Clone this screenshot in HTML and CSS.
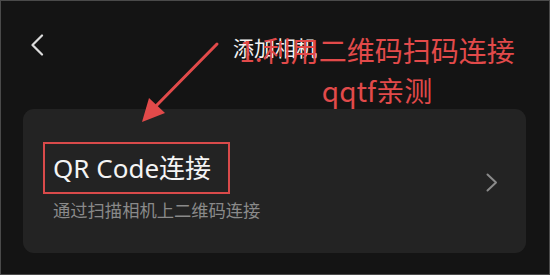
FILE: index.html
```html
<!DOCTYPE html>
<html lang="zh-CN">
<head>
    <meta charset="UTF-8">
    <meta name="viewport" content="width=device-width, initial-scale=1.0">
    <title>添加相机</title>
    <link rel="stylesheet" href="styles.css">
</head>
<body>
    <div class="screen">
        <header class="topbar">
            <svg class="back" width="14" height="22" viewBox="0 0 14 22">
                <path d="M12 1.5 L2.5 11 L12 20.5" fill="none" stroke="#dcdcdc" stroke-width="2.2" stroke-linecap="round" stroke-linejoin="round"/>
            </svg>
            <h1 class="title">添加相机</h1>
            <span></span>
        </header>

        <div class="card">
            <div class="card-text">
                <div class="card-name">QR Code连接</div>
                <div class="card-desc">通过扫描相机上二维码连接</div>
            </div>
            <svg class="arrow-right" width="12" height="19" viewBox="0 0 12 19">
                <path d="M1.5 1.5 L10 9.5 L1.5 17.5" fill="none" stroke="#8a8a8a" stroke-width="2" stroke-linecap="round" stroke-linejoin="round"/>
            </svg>
        </div>

        <!-- annotation over the screenshot -->
        <div class="note">1.利用二维码扫码连接<br>qqtf亲测</div>
        <svg class="note-arrow" width="550" height="275" viewBox="0 0 550 275">
            <line x1="217" y1="44" x2="154" y2="108" stroke="#e24a4a" stroke-width="3" stroke-linecap="round"/>
            <polygon points="142,122 149,98 165,113" fill="#e24a4a"/>
        </svg>
    </div>
</body>
</html>
```

FILE: styles.css
```css
html, body {
    margin: 0;
    padding: 0;
}
body {
    background-color: #141414;
    font-family: "Noto Sans", "Noto Sans CJK SC", sans-serif;
}
.screen {
    position: relative;
    width: 550px;
    height: 275px;
    box-sizing: border-box;
    border: 1px solid #4a4a4a;
    background-color: #141414;
    overflow: hidden;
}
.topbar {
    height: 108px;
    box-sizing: border-box;
    padding: 31px 29px 0 29px;
    display: grid;
    grid-template-columns: 1fr auto 1fr;
    align-items: start;
}
.back {
    margin-top: 2px;
}
.title {
    margin: 0;
    font-size: 21px;
    line-height: 30px;
    font-weight: normal;
    color: #f2f2f2;
    font-family: "Noto Sans CJK SC", sans-serif;
}
.card {
    margin: 0 23px 0 22px;
    height: 144px;
    box-sizing: border-box;
    background-color: #232323;
    border-radius: 11px;
    display: flex;
    align-items: center;
    padding: 0 28px 0 20px;
}
.card-text {
    flex: 1;
    padding-top: 1px;
}
.card-name {
    display: inline-block;
    border: 2.5px solid #d94a4a;
    padding: 0 17px 0 8px;
    font-size: 26px;
    line-height: 48px;
    color: #f4f4f4;
}
.card-desc {
    margin: 4px 0 0 10px;
    font-size: 17.3px;
    line-height: 24px;
    color: #8a8a8a;
    font-family: "Noto Sans CJK SC", sans-serif;
}
.arrow-right {
    margin-top: 2px;
}
.note {
    position: absolute;
    left: 226px;
    top: 29px;
    width: 300px;
    text-align: center;
    white-space: nowrap;
    font-size: 28px;
    line-height: 40px;
    color: #e24a4a;
    font-family: "Noto Sans CJK SC", sans-serif;
}
.note-arrow {
    position: absolute;
    left: -1px;
    top: -1px;
    pointer-events: none;
}
```
